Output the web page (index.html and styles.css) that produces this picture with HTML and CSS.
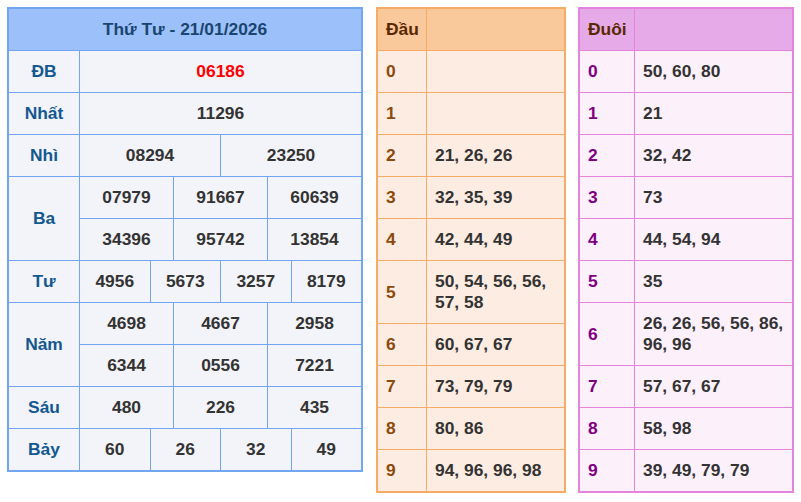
FILE: index.html
```html
<!DOCTYPE html>
<html lang="vi">
<head>
<meta charset="utf-8">
<title>Kết quả Thứ Tư - 21/01/2026</title>
<link rel="stylesheet" href="styles.css">
</head>
<body>
<div class="page">
  <div class="kq">
    <div class="kq-head">Thứ Tư - 21/01/2026</div>

    <div class="lbl">ĐB</div>
    <div class="nums c1"><span class="n db">06186</span></div>

    <div class="lbl">Nhất</div>
    <div class="nums c1"><span class="n">11296</span></div>

    <div class="lbl">Nhì</div>
    <div class="nums c2"><span class="n">08294</span><span class="n">23250</span></div>

    <div class="lbl">Ba</div>
    <div class="nums c3">
      <span class="n">07979</span><span class="n">91667</span><span class="n">60639</span>
      <span class="n">34396</span><span class="n">95742</span><span class="n">13854</span>
    </div>

    <div class="lbl">Tư</div>
    <div class="nums c4"><span class="n">4956</span><span class="n">5673</span><span class="n">3257</span><span class="n">8179</span></div>

    <div class="lbl">Năm</div>
    <div class="nums c3">
      <span class="n">4698</span><span class="n">4667</span><span class="n">2958</span>
      <span class="n">6344</span><span class="n">0556</span><span class="n">7221</span>
    </div>

    <div class="lbl">Sáu</div>
    <div class="nums c3"><span class="n">480</span><span class="n">226</span><span class="n">435</span></div>

    <div class="lbl">Bảy</div>
    <div class="nums c4"><span class="n">60</span><span class="n">26</span><span class="n">32</span><span class="n">49</span></div>
  </div>

  <div class="lt dau">
    <div class="th">Đầu</div><div class="th"></div>
    <div class="k">0</div><div class="v"></div>
    <div class="k">1</div><div class="v"></div>
    <div class="k">2</div><div class="v">21, 26, 26</div>
    <div class="k">3</div><div class="v">32, 35, 39</div>
    <div class="k">4</div><div class="v">42, 44, 49</div>
    <div class="k">5</div><div class="v">50, 54, 56, 56, 57, 58</div>
    <div class="k">6</div><div class="v">60, 67, 67</div>
    <div class="k">7</div><div class="v">73, 79, 79</div>
    <div class="k">8</div><div class="v">80, 86</div>
    <div class="k">9</div><div class="v">94, 96, 96, 98</div>
  </div>

  <div class="lt duoi">
    <div class="th">Đuôi</div><div class="th"></div>
    <div class="k">0</div><div class="v">50, 60, 80</div>
    <div class="k">1</div><div class="v">21</div>
    <div class="k">2</div><div class="v">32, 42</div>
    <div class="k">3</div><div class="v">73</div>
    <div class="k">4</div><div class="v">44, 54, 94</div>
    <div class="k">5</div><div class="v">35</div>
    <div class="k">6</div><div class="v">26, 26, 56, 56, 86, 96, 96</div>
    <div class="k">7</div><div class="v">57, 67, 67</div>
    <div class="k">8</div><div class="v">58, 98</div>
    <div class="k">9</div><div class="v">39, 49, 79, 79</div>
  </div>
</div>
</body>
</html>
```

FILE: styles.css
```css
* { box-sizing: border-box; }

html, body {
  margin: 0;
  padding: 0;
  background: #ffffff;
}

body {
  font-family: "Liberation Sans", Arial, sans-serif;
  font-size: 17.4px;
  font-weight: bold;
  line-height: 21px;
  color: #333333;
}

.page {
  display: flex;
  align-items: flex-start;
  gap: 12px;
  padding: 7px;
}

/* ---------- main results table ---------- */
.kq {
  width: 356px;
  margin-right: 1px;
  display: grid;
  grid-template-columns: 70px 1fr;
  gap: 1px;
  background: #72a6f3;
  border: 2px solid #72a6f3;
}

.kq-head {
  grid-column: 1 / -1;
  background: #9bc0fa;
  color: #1a456f;
  text-align: center;
  padding: 10px 0;
}

.lbl {
  background: #f3f4f9;
  color: #145891;
  display: flex;
  align-items: center;
  justify-content: center;
}

.nums {
  display: grid;
  gap: 1px;
  background: #72a6f3;
}
.c1 { grid-template-columns: 1fr; }
.c2 { grid-template-columns: repeat(2, 1fr); }
.c3 { grid-template-columns: repeat(3, 1fr); }
.c4 { grid-template-columns: repeat(4, 1fr); }

.n {
  background: #f3f4f9;
  text-align: center;
  padding: 10px 0;
  color: #333333;
}
.n.db { color: #ff0000; }

/* ---------- loto head / tail tables ---------- */
.lt {
  display: grid;
  gap: 1px;
}
.lt .th,
.lt .k,
.lt .v {
  padding: 10px 8px;
}
.lt .k {
  display: flex;
  align-items: center;
}
.lt .th { color: #5a2800; }

.dau {
  width: 190px;
  grid-template-columns: 48px 137px;
  background: #f6ac64;
  border: 2px solid #f6ac64;
}
.dau .th { background: #f9c99c; }
.dau .k, .dau .v { background: #fdece1; }
.dau .k { color: #8b4a0c; }

.duoi {
  width: 216px;
  grid-template-columns: 54px 157px;
  background: #e384dd;
  border: 2px solid #e384dd;
}
.duoi .th { background: #e5aae7; }
.duoi .k, .duoi .v { background: #fcf0fa; }
.duoi .k { color: #800080; }
```
